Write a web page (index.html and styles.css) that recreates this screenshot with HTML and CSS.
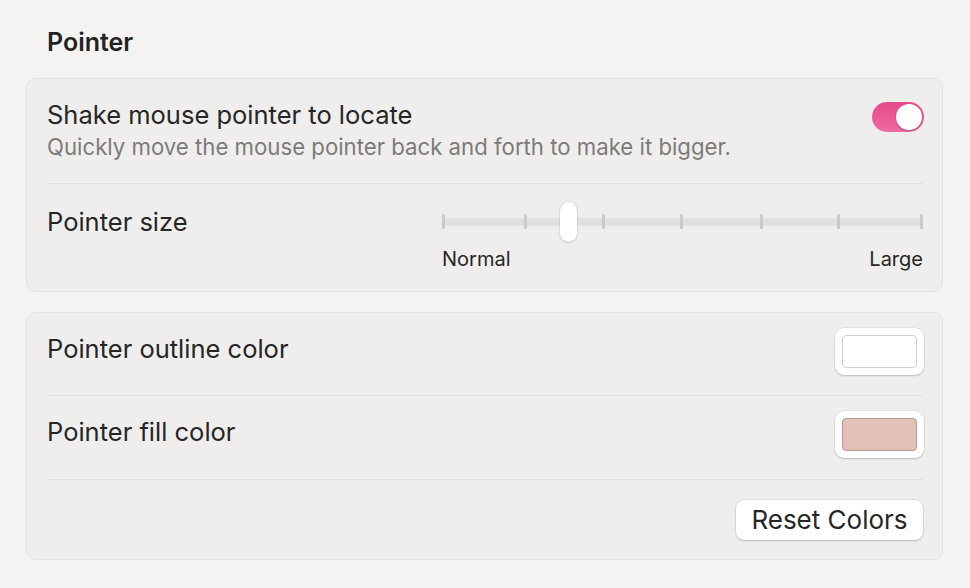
FILE: index.html
```html
<!DOCTYPE html>
<html>
<head>
<meta charset="utf-8">
<link rel="stylesheet" href="styles.css">
</head>
<body>
<div class="page">
  <h2 class="section-title">Pointer</h2>
  <div class="card">
    <div class="row row-shake">
      <div class="row-text">
        <div class="label">Shake mouse pointer to locate</div>
        <div class="sub">Quickly move the mouse pointer back and forth to make it bigger.</div>
      </div>
      <div class="toggle"><div class="knob"></div></div>
    </div>
    <div class="row row-size">
      <div class="label size-label">Pointer size</div>
      <div class="slider">
        <div class="track-area">
          <div class="track"></div>
          <span class="tick" style="left:0px"></span>
          <span class="tick" style="left:82px"></span>
          <span class="tick" style="left:160px"></span>
          <span class="tick" style="left:238px"></span>
          <span class="tick" style="left:318px"></span>
          <span class="tick" style="left:395px"></span>
          <span class="tick" style="left:478px"></span>
          <span class="thumb" style="left:118px"></span>
        </div>
        <div class="slider-labels"><span>Normal</span><span>Large</span></div>
      </div>
    </div>
  </div>
  <div class="card card2">
    <div class="row row-color">
      <div class="label">Pointer outline color</div>
      <div class="swatch"><div class="swatch-inner white"></div></div>
    </div>
    <div class="row row-color">
      <div class="label">Pointer fill color</div>
      <div class="swatch"><div class="swatch-inner fill"></div></div>
    </div>
    <div class="row row-reset">
      <button class="btn">Reset Colors</button>
    </div>
  </div>
</div>
</body>
</html>
```

FILE: styles.css
```css
html, body {
  margin: 0;
  padding: 0;
  background: #f4f3f1;
}
body {
  font-family: Inter, "Open Sans", "Liberation Sans", sans-serif;
  color: #262626;
  width: 970px;
  height: 588px;
  overflow: hidden;
}
.page {
  padding: 26px 26px 0 26px;
}
.section-title {
  margin: 0 0 0 21px;
  font-size: 25px;
  font-weight: 600;
  line-height: 32px;
  color: #232323;
  height: 52px;
}
.card {
  background: #efeeec;
  border: 1px solid #e3e2e0;
  border-radius: 10px;
  padding: 0 19px 0 20px;
  width: 876px;
}
.card2 {
  margin-top: 20px;
}
.row {
  display: flex;
  border-bottom: 1px solid #e0dfdd;
}
.row:last-child {
  border-bottom: none;
}
.label {
  font-size: 25.5px;
  line-height: 32px;
  color: #262626;
}
.row-shake {
  padding: 20px 0 20px;
  justify-content: space-between;
  align-items: flex-start;
}
.sub {
  font-size: 22.2px;
  line-height: 32px;
  color: #7c7b7a;
}
.toggle {
  width: 52px;
  height: 30px;
  border-radius: 15px;
  background: linear-gradient(180deg, #e84a8b 0%, #ee6aa3 100%);
  margin-top: 3px;
  margin-right: -1px;
  box-sizing: border-box;
  padding: 2px;
  display: flex;
  justify-content: flex-end;
}
.knob {
  width: 26px;
  height: 26px;
  border-radius: 50%;
  background: #fff;
  box-shadow: 0 1px 2px rgba(0,0,0,0.25);
}
.row-size {
  padding: 18px 0 20px;
  justify-content: space-between;
}
.size-label {
  line-height: 40px;
}
.slider {
  width: 481px;
}
.track-area {
  position: relative;
  height: 40px;
}
.track {
  position: absolute;
  left: 0;
  right: 0;
  top: 16px;
  height: 8px;
  border-radius: 4px;
  background: #e1e0de;
}
.tick {
  position: absolute;
  top: 12px;
  width: 3px;
  height: 15px;
  border-radius: 1.5px;
  background: #cbcac8;
}
.thumb {
  position: absolute;
  top: 0;
  width: 17px;
  height: 40px;
  border-radius: 8.5px;
  background: #ffffff;
  box-shadow: 0 0.5px 2px rgba(0,0,0,0.3);
}
.slider-labels {
  display: flex;
  justify-content: space-between;
  margin-top: 5px;
  font-size: 20px;
  line-height: 24px;
  color: #262626;
}
.row-color {
  justify-content: space-between;
  align-items: flex-start;
  box-sizing: border-box;
  height: 83px;
  padding-top: 15px;
}
.row-color + .row-color {
  height: 84px;
}
.row-color .label {
  margin-top: 5px;
}
.swatch {
  width: 89px;
  height: 47px;
  box-sizing: border-box;
  border-radius: 9px;
  background: #fff;
  box-shadow: 0 0 0 0.5px rgba(0,0,0,0.08), 0 1px 2px rgba(0,0,0,0.18);
  padding: 7px;
  margin-right: -1px;
}
.swatch-inner {
  height: 100%;
  box-sizing: border-box;
  border-radius: 4px;
}
.swatch-inner.white {
  background: #fff;
  border: 1px solid #cfcfcf;
}
.swatch-inner.fill {
  background: #e2c1b7;
  border: 1px solid #b89a92;
}
.row-reset {
  height: 79px;
  justify-content: flex-end;
  align-items: center;
}
.btn {
  font-family: inherit;
  font-size: 26px;
  color: #262626;
  background: #fff;
  border: none;
  border-radius: 8px;
  height: 40px;
  padding: 0;
  width: 187px;
  box-shadow: 0 0 0 0.5px rgba(0,0,0,0.1), 0 1px 2px rgba(0,0,0,0.2);
}
```
